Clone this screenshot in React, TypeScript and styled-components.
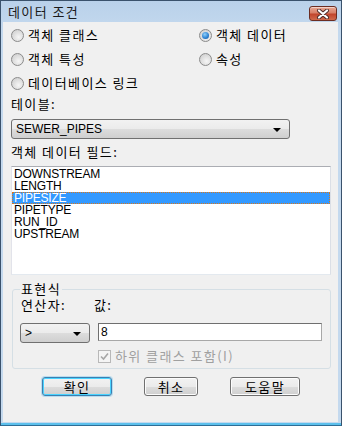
import styled, { createGlobalStyle, css } from 'styled-components';

const GlobalStyle = createGlobalStyle`
  body {
    margin: 0;
    font-family: 'Liberation Sans', 'Noto Sans CJK KR', sans-serif;
    font-size: 12px;
    color: #000;
  }
`;

// Korean UI text: wider, Gulim-like spacing
const hangul = css`
  font-family: 'Noto Sans CJK KR', sans-serif;
  font-size: 13px;
  letter-spacing: 1.4px;
  line-height: 14px;
`;

const radios = [
  { label: '객체 클래스', checked: false },
  { label: '객체 데이터', checked: true },
  { label: '객체 특성', checked: false },
  { label: '속성', checked: false },
  { label: '데이터베이스 링크', checked: false },
];

const fields = ['DOWNSTREAM', 'LENGTH', 'PIPESIZE', 'PIPETYPE', 'RUN_ID', 'UPSTREAM'];

export default function App() {
  return (
    <>
      <GlobalStyle />
      <Window>
        <TitleBar>
          <Title>데이터 조건</Title>
          <CloseButton>
            <svg width="14" height="10" viewBox="0 0 14 10">
              <path d="M3 1.5 L11 8.5 M11 1.5 L3 8.5" stroke="#4a2a28" strokeWidth="4" strokeLinecap="round" />
              <path d="M3 1.5 L11 8.5 M11 1.5 L3 8.5" stroke="#fff" strokeWidth="2.2" strokeLinecap="round" />
            </svg>
          </CloseButton>
        </TitleBar>

        <Body>
          <RadioGrid>
            {radios.map((r) => (
              <RadioRow key={r.label}>
                <Radio checked={r.checked} />
                <span>{r.label}</span>
              </RadioRow>
            ))}
          </RadioGrid>

          <Label $top={2}>테이블:</Label>
          <Combo $width={279} $top={8}>
            <ComboText>SEWER_PIPES</ComboText>
            <Arrow />
          </Combo>

          <Label $top={6}>객체 데이터 필드:</Label>
          <List>
            {fields.map((f) => (
              <ListItem key={f} selected={f === 'PIPESIZE'}>
                {f}
              </ListItem>
            ))}
          </List>

          <Group>
            <Legend>표현식</Legend>
            <LabelRow>
              <OpLabel>연산자:</OpLabel>
              <span>값:</span>
            </LabelRow>
            <InputRow>
              <Combo $width={70} $top={0}>
                <ComboText>&gt;</ComboText>
                <Arrow />
              </Combo>
              <TextInput>8</TextInput>
            </InputRow>
            <CheckRow>
              <CheckBox>
                <svg width="9" height="9" viewBox="0 0 9 9">
                  <path d="M1 4.5 L3.5 7 L8 1.5" stroke="#a6a6a6" strokeWidth="1.6" fill="none" />
                </svg>
              </CheckBox>
              <span>하위 클래스 포함(I)</span>
            </CheckRow>
          </Group>

          <ButtonRow>
            <Button $width={70} $default>확인</Button>
            <Button $width={54}>취소</Button>
            <Button $width={70}>도움말</Button>
          </ButtonRow>
        </Body>
      </Window>
    </>
  );
}

const Window = styled.div`
  box-sizing: border-box;
  width: 342px;
  height: 426px;
  border: 1px solid #3a526c;
  border-bottom-color: #2f6e96;
  background: linear-gradient(#b9d1ea, #c4d9ee 30px, #c4d9ee);
  box-shadow: inset 0 -2px 0 #5cc0ec;
  display: flex;
  flex-direction: column;
`;

const TitleBar = styled.div`
  height: 21px;
  display: flex;
  align-items: center;
  justify-content: space-between;
  padding: 0 4px 0 7px;
`;

const Title = styled.div`
  ${hangul}
  color: #1a1a1a;
`;

const CloseButton = styled.div`
  box-sizing: border-box;
  width: 28px;
  height: 15px;
  margin-top: 4px;
  border: 1px solid #6b2d22;
  border-radius: 3px;
  background: linear-gradient(#e8a894, #d88068 45%, #c2452c 55%, #cf6a4c);
  box-shadow: inset 0 1px 0 rgba(255, 255, 255, 0.5);
  display: flex;
  align-items: center;
  justify-content: center;
`;

const Body = styled.div`
  flex: 1;
  margin: 0 3px 3px 2px;
  background: #f0f0f0;
  padding: 1px 0 0 8px;
  display: flex;
  flex-direction: column;
  align-items: flex-start;
`;

const RadioGrid = styled.div`
  display: grid;
  grid-template-columns: 188px 120px;
  grid-auto-rows: 24px;
`;

const RadioRow = styled.label`
  ${hangul}
  display: flex;
  align-items: center;
  gap: 4px;
`;

const Radio = styled.span<{ checked: boolean }>`
  box-sizing: border-box;
  flex: none;
  width: 13px;
  height: 13px;
  border-radius: 50%;
  border: 1px solid #8b8b8b;
  background: radial-gradient(circle at 60% 65%, #f6f6f6, #d6d6d6 70%, #cfcfcf);
  position: relative;
  &::after {
    content: '';
    display: ${(p) => (p.checked ? 'block' : 'none')};
    position: absolute;
    left: 2px;
    top: 2px;
    width: 7px;
    height: 7px;
    border-radius: 50%;
    background: radial-gradient(circle at 40% 35%, #8fd0fb, #2a7fd0 60%, #174f8e);
  }
`;

const Label = styled.div<{ $top: number }>`
  ${hangul}
  margin-top: ${(p) => p.$top}px;
`;

const Combo = styled.div<{ $width: number; $top: number }>`
  box-sizing: border-box;
  margin-top: ${(p) => p.$top}px;
  width: ${(p) => p.$width}px;
  height: 20px;
  border: 1px solid #707070;
  border-radius: 3px;
  background: linear-gradient(#f2f2f2, #ebebeb 50%, #dddddd 50%, #cfcfcf);
  display: flex;
  align-items: center;
  justify-content: space-between;
  padding: 0 8px 0 4px;
`;

const ComboText = styled.span`
  font-size: 12px;
  line-height: 14px;
`;

const Arrow = styled.span`
  width: 0;
  height: 0;
  border-left: 4px solid transparent;
  border-right: 4px solid transparent;
  border-top: 4px solid #000;
  margin-top: 2px;
`;

const List = styled.div`
  box-sizing: border-box;
  margin-top: 7px;
  width: 320px;
  height: 109px;
  background: #fff;
  border: 1px solid;
  border-color: #abadb3 #dbdfe6 #e3e9ef #e2e3ea;
  padding-top: 1px;
`;

const ListItem = styled.div<{ selected: boolean }>`
  height: 12px;
  line-height: 12px;
  padding-left: 2px;
  font-size: 12px;
  letter-spacing: -0.2px;
  background: ${(p) => (p.selected ? '#3399ff' : 'transparent')};
  color: ${(p) => (p.selected ? '#fff' : '#000')};
  outline: ${(p) => (p.selected ? '1px dotted #d9781c' : 'none')};
  outline-offset: -1px;
`;

const Group = styled.fieldset`
  margin: 7px 0 0 1px;
  width: 318px;
  box-sizing: border-box;
  border: 1px solid #d5dfe5;
  border-radius: 3px;
  padding: 0 8px 5px 8px;
  display: flex;
  flex-direction: column;
  align-items: flex-start;
`;

const Legend = styled.legend`
  ${hangul}
  padding: 0 1px;
  margin-left: -1px;
`;

const LabelRow = styled.div`
  ${hangul}
  display: flex;
  margin-top: 2px;
`;

const OpLabel = styled.span`
  width: 73px;
`;

const InputRow = styled.div`
  display: flex;
  gap: 8px;
  margin-top: 11px;
  margin-left: -1px;
`;

const TextInput = styled.div`
  box-sizing: border-box;
  width: 224px;
  height: 18px;
  border: 1px solid;
  border-color: #6f6f6f #a8a8a8 #a8a8a8 #6f6f6f;
  background: #fff;
  padding: 1px 2px;
  font-size: 12px;
  line-height: 14px;
`;

const CheckRow = styled.div`
  ${hangul}
  display: flex;
  align-items: center;
  gap: 4px;
  margin: 6px 0 0 77px;
  color: #a0a0a0;
`;

const CheckBox = styled.span`
  box-sizing: border-box;
  width: 13px;
  height: 13px;
  border: 1px solid #b8b8b8;
  background: #f4f4f4;
  display: flex;
  align-items: center;
  justify-content: center;
`;

const ButtonRow = styled.div`
  display: flex;
  gap: 32px;
  margin: 8px 0 0 31px;
`;

const Button = styled.button<{ $width: number; $default?: boolean }>`
  ${hangul}
  box-sizing: border-box;
  width: ${(p) => p.$width}px;
  height: 19px;
  padding: 0;
  color: #000;
  border: 1px solid ${(p) => (p.$default ? '#3c7fb1' : '#707070')};
  border-radius: 3px;
  background: linear-gradient(#f2f2f2, #ebebeb 50%, #dddddd 50%, #cfcfcf);
  box-shadow: ${(p) =>
    p.$default ? 'inset 0 0 0 1px #48d3ff, 0 0 0 1px rgba(60, 180, 240, 0.3)' : 'inset 0 0 0 1px #fcfcfc'};
`;
